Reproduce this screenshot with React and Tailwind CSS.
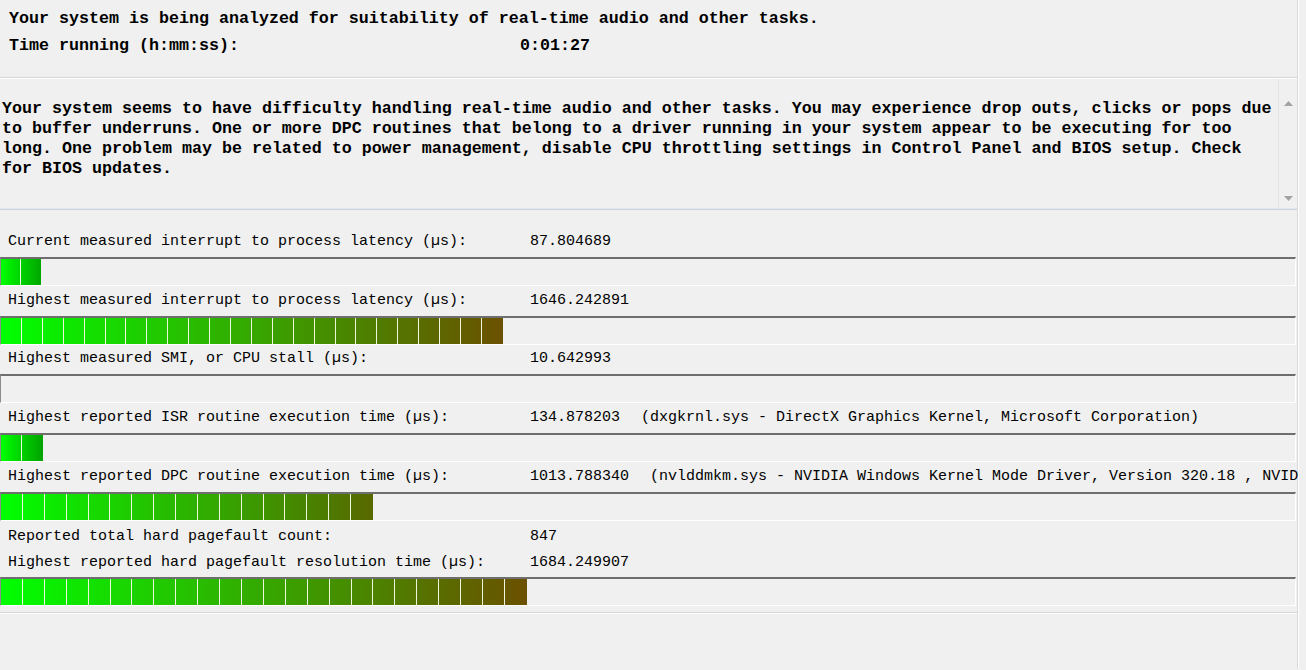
import React from "react";

const START = [0, 255, 0];

function mix(a, b, t) {
  const c = a.map((v, i) => Math.round(v + (b[i] - v) * t));
  return `rgb(${c[0]},${c[1]},${c[2]})`;
}

function Bar({ len = 0, n = 0, end = [0, 160, 0] }) {
  const segs = [];
  const w = n ? len / n : 0;
  for (let i = 0; i < n; i++) {
    const c0 = mix(START, end, (i * w) / len);
    const c1 = mix(START, end, ((i + 1) * w - 1) / len);
    segs.push(
      <div
        key={i}
        className={i < n - 1 ? "h-full shrink-0 border-r border-r-[#eef6dc]" : "h-full shrink-0"}
        style={{ width: w, background: `linear-gradient(to right, ${c0}, ${c1})` }}
      />
    );
  }
  return (
    <div className="h-[29px] w-[1296px] border-t-2 border-t-[#6e6e6e] border-l border-l-[#8c8c8c] border-b border-b-white border-r border-r-white flex">
      {segs}
    </div>
  );
}

function Row({ label, value, extra, h = "h-[30px]" }) {
  return (
    <div className={`${h} flex items-center pl-[8px] whitespace-pre`}>
      <div className="w-[522px] shrink-0">{label}</div>
      <div className="shrink-0">{value}</div>
      {extra && <div className="ml-[21px] shrink-0">{extra}</div>}
    </div>
  );
}

export default function App() {
  return (
    <div className="w-[1306px] h-[670px] bg-[#f0f0f0] overflow-hidden text-black font-['Liberation_Mono','Courier_New',monospace]">
      <div className="w-[1299px] border-r border-r-white">
        <div className="w-[1298px] border-r border-r-[#d8d8d8]">
          {/* top section */}
          <div className="h-[77px] pt-[5px] pl-[9px] font-bold text-[16.67px] leading-[27px] whitespace-pre">
            <div>Your system is being analyzed for suitability of real-time audio and other tasks.</div>
            <div className="flex">
              <div className="w-[511px]">Time running (h:mm:ss):</div>
              <div>0:01:27</div>
            </div>
          </div>

          {/* message box */}
          <div className="border-t border-t-[#d6d6d6]">
            <div className="border-t border-t-white border-b border-b-[#c9d4de]">
              <div className="h-[130px] flex border-b border-b-[#e2e8ee]">
                <div className="flex-1 pl-[2px] pt-[20px] font-bold text-[16.67px] leading-[20px] whitespace-pre">
                  <div>Your system seems to have difficulty handling real-time audio and other tasks. You may experience drop outs, clicks or pops due</div>
                  <div>to buffer underruns. One or more DPC routines that belong to a driver running in your system appear to be executing for too</div>
                  <div>long. One problem may be related to power management, disable CPU throttling settings in Control Panel and BIOS setup. Check</div>
                  <div>for BIOS updates.</div>
                </div>
                <div className="w-[19px] border-l border-l-[#e4e4e4] flex flex-col items-center justify-between pt-[22px] pb-[7px]">
                  <svg width="9" height="5" viewBox="0 0 9 5">
                    <path d="M0 5 L4.5 0 L9 5 Z" fill="#a3a3a3" />
                  </svg>
                  <svg width="9" height="5" viewBox="0 0 9 5">
                    <path d="M0 0 L9 0 L4.5 5 Z" fill="#a3a3a3" />
                  </svg>
                </div>
              </div>
            </div>
          </div>

          {/* measurements */}
          <div className="pt-[17px] pb-[6px] text-[15px] border-b border-b-[#d6d6d6]">
            <Row label="Current measured interrupt to process latency (µs):" value="87.804689" />
            <Bar len={40} n={2} end={[0, 165, 0]} />
            <Row label="Highest measured interrupt to process latency (µs):" value="1646.242891" />
            <Bar len={502} n={24} end={[107, 80, 0]} />
            <Row label="Highest measured SMI, or CPU stall (µs):" value="10.642993" h="h-[29px]" />
            <Bar len={0} n={0} />
            <Row
              label="Highest reported ISR routine execution time (µs):"
              value="134.878203"
              extra="(dxgkrnl.sys - DirectX Graphics Kernel, Microsoft Corporation)"
            />
            <Bar len={42} n={2} end={[0, 160, 0]} />
            <Row
              label="Highest reported DPC routine execution time (µs):"
              value="1013.788340"
              extra="(nvlddmkm.sys - NVIDIA Windows Kernel Mode Driver, Version 320.18 , NVID"
            />
            <Bar len={372} n={17} end={[88, 104, 0]} />
            <Row label="Reported total hard pagefault count:" value="847" h="h-[26px] pt-[6px]" />
            <Row label="Highest reported hard pagefault resolution time (µs):" value="1684.249907" h="h-[30px] pt-[2px]" />
            <Bar len={526} n={24} end={[107, 80, 0]} />
          </div>
          <div className="border-t border-t-white h-[56px]" />
        </div>
      </div>
    </div>
  );
}
